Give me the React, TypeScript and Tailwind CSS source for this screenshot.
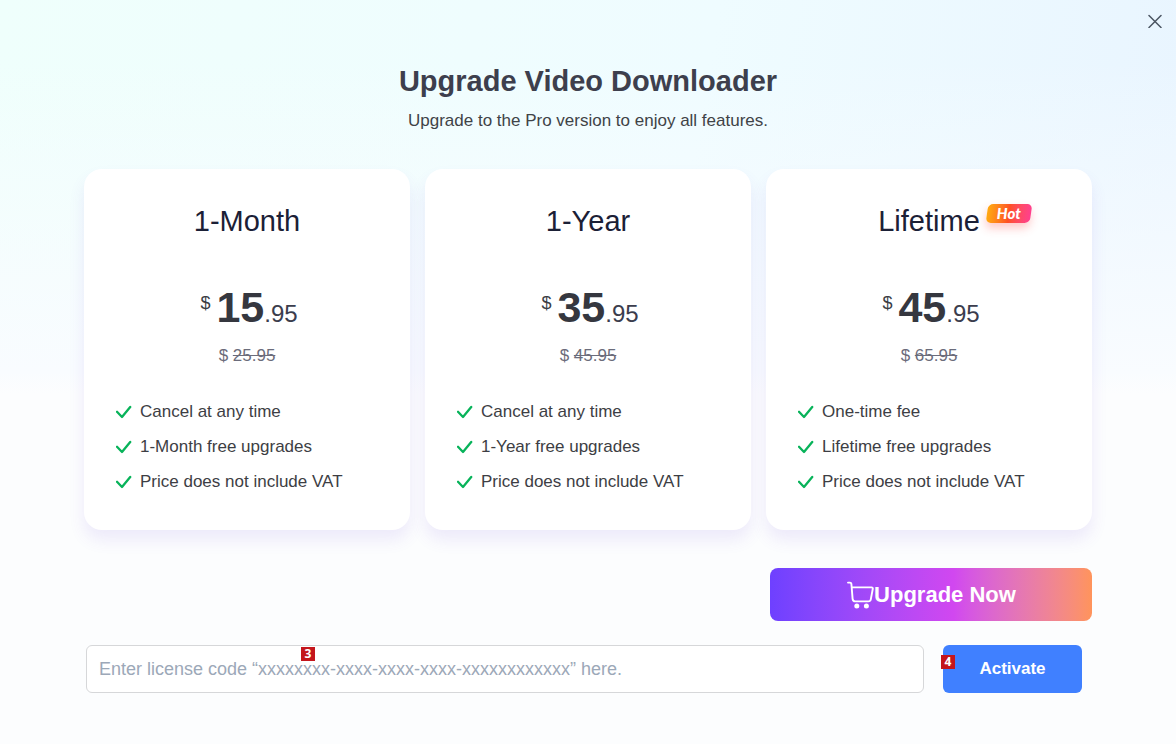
const plans = [
  {
    name: "1-Month",
    whole: "15",
    cents: ".95",
    oldPrice: "25.95",
    hot: false,
    features: [
      "Cancel at any time",
      "1-Month free upgrades",
      "Price does not include VAT",
    ],
  },
  {
    name: "1-Year",
    whole: "35",
    cents: ".95",
    oldPrice: "45.95",
    hot: false,
    features: [
      "Cancel at any time",
      "1-Year free upgrades",
      "Price does not include VAT",
    ],
  },
  {
    name: "Lifetime",
    whole: "45",
    cents: ".95",
    oldPrice: "65.95",
    hot: true,
    features: [
      "One-time fee",
      "Lifetime free upgrades",
      "Price does not include VAT",
    ],
  },
];

function CheckIcon() {
  return (
    <svg
      viewBox="0 0 16 14"
      className="h-3.5 w-4 shrink-0"
      fill="none"
      stroke="#08b35a"
      strokeWidth="2.3"
      aria-hidden="true"
    >
      <path d="M1 6.8 6 12 14.2 2" strokeLinecap="round" strokeLinejoin="round" />
    </svg>
  );
}

function CartIcon() {
  return (
    <svg
      viewBox="0 0 28 28"
      className="size-7 shrink-0"
      fill="none"
      stroke="currentColor"
      strokeWidth="1.9"
      strokeLinecap="round"
      strokeLinejoin="round"
      aria-hidden="true"
    >
      <path d="M2 1.6H4Q5.2 1.6 5.4 3L6.6 17.8Q6.9 20.4 9.2 20.4H22.4Q24.4 20.4 24.8 18.4L26.8 7.8Q27 6.4 25.6 6.4H5.8" />
      <circle cx="10.8" cy="25" r="2.5" fill="currentColor" stroke="none" />
      <circle cx="20.4" cy="25" r="2.5" fill="currentColor" stroke="none" />
    </svg>
  );
}

function HotBadge() {
  return (
    <span className="absolute top-[3px] left-full ml-[7px] flex h-[19px] w-11 items-center justify-center">
      <span className="absolute inset-0 -skew-x-8 rounded-[5px] bg-linear-to-r from-[#ffa90f] via-[#ff4f22] to-[#ff3f8e] shadow-[0_5px_10px_rgba(255,70,70,0.3)]" />
      <span className="relative pb-px font-['Lato',sans-serif] text-[15px] leading-none font-black text-white italic">
        Hot
      </span>
    </span>
  );
}

function StepMark({ value }: { value: string }) {
  return (
    <span className="flex h-3.5 w-[14px] items-center justify-center bg-[#c4161c] font-['Noto_Sans',sans-serif] text-xs leading-none font-bold text-white">
      {value}
    </span>
  );
}

function PlanCard({ plan }: { plan: (typeof plans)[number] }) {
  return (
    <article className="rounded-[18px] bg-white px-8 pt-8 pb-9 shadow-[0_10px_16px_rgba(112,72,220,0.1)]">
      <h2 className="text-center text-[29px] leading-10 text-[#1b2036]">
        <span className="relative inline-block">
          {plan.name}
          {plan.hot && <HotBadge />}
        </span>
      </h2>
      <p className="mt-10 flex items-baseline justify-center pl-1 text-[#3b3d4d]">
        <span className="mr-1.5 self-start pt-2.5 text-lg leading-6 text-[#3b3d45]">
          $
        </span>
        <strong className="text-[43px] leading-[52px] font-bold text-[#35373f]">
          {plan.whole}
        </strong>
        <span className="text-2xl">{plan.cents}</span>
      </p>
      <p className="mt-[11px] text-center text-[17px] leading-6 text-[#6b6c7b]">
        $ <s>{plan.oldPrice}</s>
      </p>
      <ul className="mt-8 space-y-[11px]">
        {plan.features.map((feature) => (
          <li
            key={feature}
            className="flex items-center gap-2 text-[17px] leading-6 text-[#3d3e44]"
          >
            <CheckIcon />
            {feature}
          </li>
        ))}
      </ul>
    </article>
  );
}

export default function App() {
  return (
    <main className="relative min-h-screen bg-[#fcfdfe] bg-[linear-gradient(to_bottom,transparent_8%,#f9fcff_50%,#fcfdfe_53%),linear-gradient(100deg,#effffc,#effcff_55%,#e9f5ff_92%)] px-[84px] pt-[61px] pb-[50px] font-['Liberation_Sans',Arial,sans-serif]">
      <button
        type="button"
        aria-label="Close"
        className="absolute top-3.5 right-3.5 text-[#4b5563]"
      >
        <svg
          viewBox="0 0 14 14"
          className="size-3.5"
          fill="none"
          stroke="currentColor"
          strokeWidth="1.5"
        >
          <path d="M1 1.5 13 13.5M13 1.5 1 13.5" strokeLinecap="round" />
        </svg>
      </button>

      <header className="text-center">
        <h1 className="text-[29px] leading-10 font-bold text-[#3d3f4d]">
          Upgrade Video Downloader
        </h1>
        <p className="mt-2 text-[17px] leading-6 text-[#3f4347]">
          Upgrade to the Pro version to enjoy all features.
        </p>
      </header>

      <section className="mt-9 grid grid-cols-3 gap-[15px]">
        {plans.map((plan) => (
          <PlanCard key={plan.name} plan={plan} />
        ))}
      </section>

      <div className="mt-[38px] flex justify-end">
        <button
          type="button"
          className="flex h-[53px] w-[322px] items-center justify-center rounded-lg bg-linear-to-r from-[#6e40ff] via-[#d147f0] via-57% to-[#ff945b] text-[22px] font-bold text-white"
        >
          <CartIcon />
          Upgrade Now
        </button>
      </div>

      <form
        className="mt-6 flex gap-[19px] pr-2.5 pl-0.5"
        onSubmit={(e) => e.preventDefault()}
      >
        <div className="relative flex-1">
          <input
            type="text"
            aria-label="License code"
            placeholder="Enter license code “xxxxxxxx-xxxx-xxxx-xxxx-xxxxxxxxxxxx” here."
            className="h-12 w-full rounded-md border border-[#d6d7d9] bg-white px-3 text-lg text-[#3d3f4d] outline-none placeholder:text-[#9ca8b8]"
          />
          <div className="pointer-events-none absolute top-0.5 left-[215px]">
            <StepMark value="3" />
          </div>
        </div>
        <button
          type="submit"
          className="relative h-12 w-[139px] rounded-md bg-[#4080ff] text-[17px] font-bold text-white"
        >
          <span className="absolute top-2.5 -left-0.5">
            <StepMark value="4" />
          </span>
          Activate
        </button>
      </form>
    </main>
  );
}
